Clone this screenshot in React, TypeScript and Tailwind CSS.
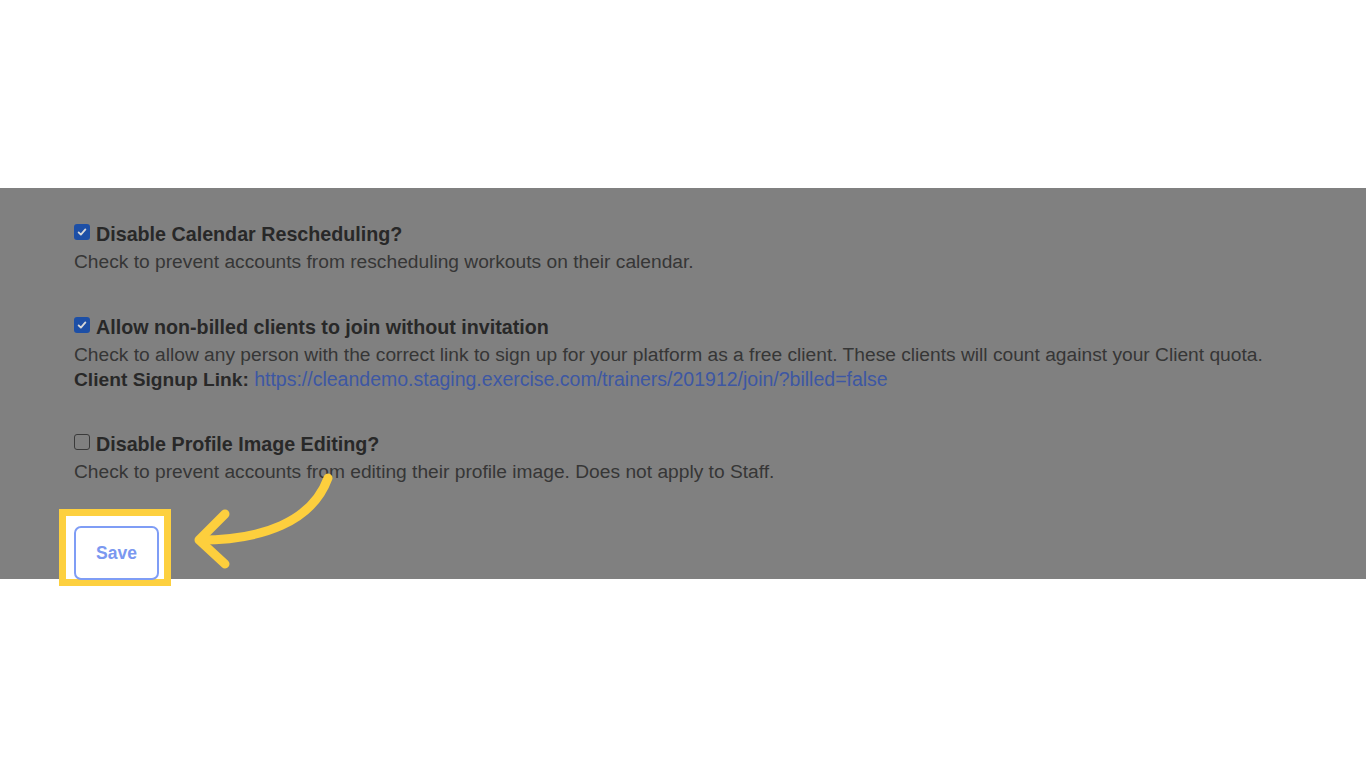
import React from 'react';

function Box({ checked }: { checked: boolean }) {
  if (checked) {
    return (
      <span className="mt-[3px] flex h-[16px] w-[16px] shrink-0 items-center justify-center rounded-[3px] bg-[#1d4fa6]">
        <svg viewBox="0 0 16 16" className="h-[12px] w-[12px]" fill="none" stroke="#d8d8d8" strokeWidth="2.4" strokeLinecap="round" strokeLinejoin="round">
          <path d="M3.5 8.5 L6.5 11.5 L12.5 4.5" />
        </svg>
      </span>
    );
  }
  return <span className="mt-[3px] h-[16px] w-[16px] shrink-0 rounded-[3px] border border-[#3a3a3a] bg-[#808080]" />;
}

function Setting({
  checked,
  title,
  children,
}: {
  checked: boolean;
  title: string;
  children: React.ReactNode;
}) {
  return (
    <div>
      <div className="flex items-start gap-[6px]">
        <Box checked={checked} />
        <span className="text-[19.7px] font-bold leading-[26px] text-[#282828]">{title}</span>
      </div>
      <div className="mt-[3px] text-[19.2px] leading-[24px] text-[#363636]">{children}</div>
    </div>
  );
}

export default function App() {
  return (
    <div className="relative h-[768px] w-[1366px] bg-white font-['Liberation_Sans',Arial,sans-serif]">
      <div className="h-[188px]" />
      <div className="flex h-[391px] flex-col bg-[#808080] pl-[74px] pt-[33px]">
        <Setting checked title="Disable Calendar Rescheduling?">
          Check to prevent accounts from rescheduling workouts on their calendar.
        </Setting>
        <div className="mt-[40px]">
          <Setting checked title="Allow non-billed clients to join without invitation">
            <p>
              Check to allow any person with the correct link to sign up for your platform as a free client. These clients will count against your Client quota.
            </p>
            <p>
              <span className="font-bold text-[#282828]">Client Signup Link: </span>
              <span className="text-[19.5px] text-[#3d57a3]">https://cleandemo.staging.exercise.com/trainers/201912/join/?billed=false</span>
            </p>
          </Setting>
        </div>
        <div className="mt-[39px]">
          <Setting checked={false} title="Disable Profile Image Editing?">
            Check to prevent accounts from editing their profile image. Does not apply to Staff.
          </Setting>
        </div>
      </div>

      {/* highlight around the save button */}
      <div className="absolute left-[59px] top-[509px] h-[77px] w-[112px] border-[7px] border-[#fdd03f] bg-white">
        <div className="ml-[8px] mt-[10px] flex h-[54px] w-[85px] items-center justify-center rounded-[7px] border-2 border-[#7f9df5] text-[17.5px] font-bold text-[#7b98f0]">
          Save
        </div>
      </div>

      <svg className="absolute left-0 top-0" width="1366" height="768" viewBox="0 0 1366 768" fill="none">
        <g stroke="#fdcf3d" strokeWidth="9" strokeLinecap="round" strokeLinejoin="round">
          <path d="M328 478 C 312 522, 262 540, 200 540" />
          <path d="M225 514 L199 540 L225 564" />
        </g>
      </svg>
    </div>
  );
}
